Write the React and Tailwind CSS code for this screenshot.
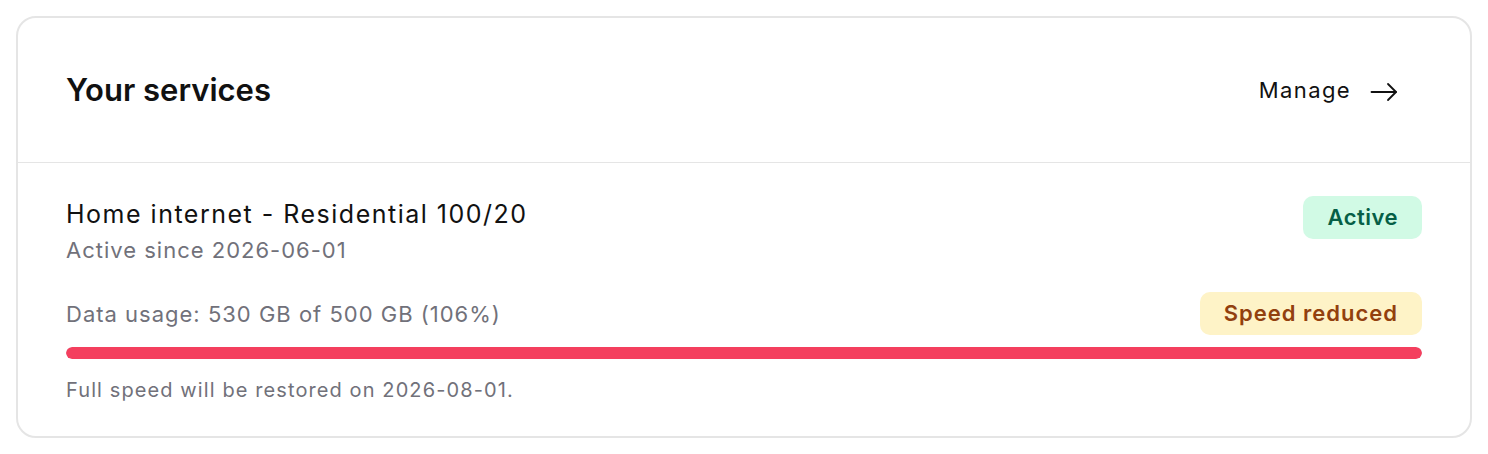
import React from "react";

export default function App() {
  const used = 530;
  const total = 500;
  const pct = Math.min(100, (used / total) * 100);
  return (
    <div className="p-4 bg-white" style={{ fontFamily: "Inter, 'Noto Sans', sans-serif" }}>
      <div className="rounded-[20px] border-2 border-[#e5e5e5] bg-white">
        <div className="flex items-center justify-between px-12 py-12 border-b border-[#e5e5e5]">
          <h2 className="text-[31px] leading-[48px] font-semibold text-[#111111]">Your services</h2>
          <button className="flex items-center gap-[19px] px-6 h-12 text-[22px] tracking-[1.4px] text-[#111111]">
            <span>Manage</span>
            <svg width="28" height="20" viewBox="0 0 28 20" fill="none" stroke="currentColor" strokeWidth="1.8" strokeLinecap="round" strokeLinejoin="round" className="mt-[3px]">
              <path d="M1.5 10H26" />
              <path d="M18 2l8 8-8 8" />
            </svg>
          </button>
        </div>
        <div className="px-12 pt-[33px] pb-8">
          <div className="flex items-start justify-between">
            <div>
              <div className="text-[25px] leading-[36px] tracking-[1.5px] text-[#111111]">Home internet - Residential 100/20</div>
              <div className="text-[22px] leading-[36px] tracking-[1px] text-[#71717a]">Active since 2026-06-01</div>
            </div>
            <span className="rounded-[10px] bg-[#d1fae5] px-6 h-[43px] flex items-center text-[22px] tracking-[0.5px] font-semibold text-[#065f46]">Active</span>
          </div>
          <div className="mt-6 flex items-center justify-between">
            <div className="text-[22px] leading-[28px] tracking-[1px] text-[#71717a]">Data usage: 530 GB of 500 GB (106%)</div>
            <span className="rounded-[10px] bg-[#fef3c7] px-6 h-[43px] flex items-center text-[22px] tracking-[1px] font-semibold text-[#92400e]">Speed reduced</span>
          </div>
          <div className="mt-3 h-3 w-full rounded-full bg-[#e5e7eb] overflow-hidden">
            <div className="h-full rounded-full bg-[#f43f5e]" style={{ width: `${pct}%` }} />
          </div>
          <div className="mt-[17px] text-[20px] leading-[28px] tracking-[1.1px] text-[#71717a]">Full speed will be restored on 2026-08-01.</div>
        </div>
      </div>
    </div>
  );
}
